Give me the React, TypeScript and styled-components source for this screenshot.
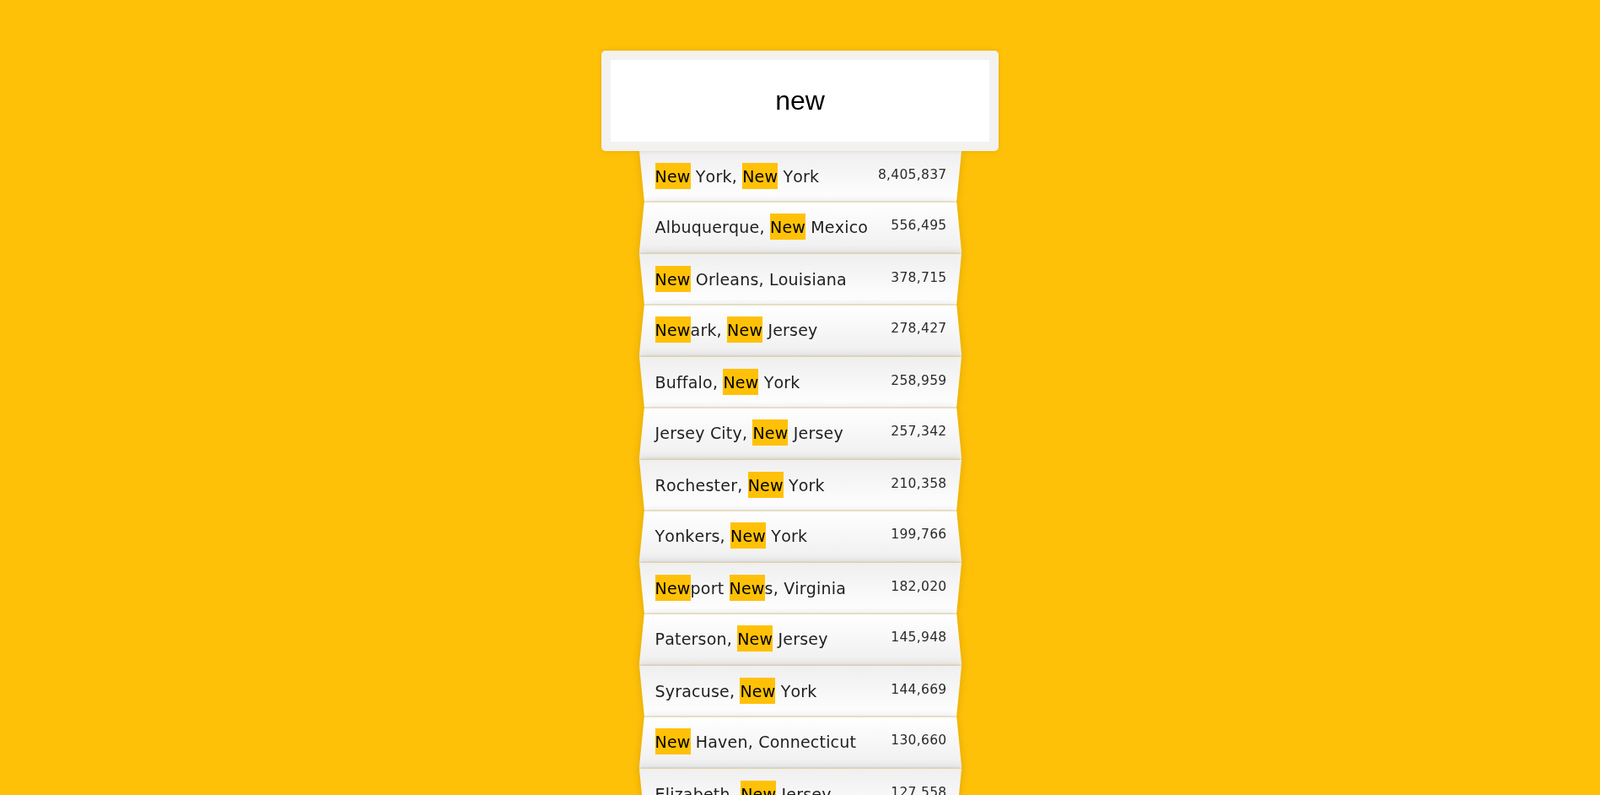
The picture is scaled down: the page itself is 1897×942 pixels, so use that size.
import React, { useState } from "react";
import styled, { createGlobalStyle, css } from "styled-components";

const yellow = "#ffc107";

const GlobalStyle = createGlobalStyle`
  html {
    box-sizing: border-box;
    background: ${yellow};
    overflow: hidden;
  }
  *, *:before, *:after {
    box-sizing: inherit;
  }
  body {
    margin: 8px;
    font-family: "DejaVu Sans", "Liberation Sans", sans-serif;
    font-size: 19px;
    color: #1e1e1e;
  }
`;

const SearchForm = styled.form`
  width: 376px;
  margin: 42px auto 0;
`;

const SearchInput = styled.input`
  display: block;
  position: relative;
  top: 10px;
  z-index: 2;
  width: calc(100% + 95px);
  height: 119px;
  margin: 0 -47.5px;
  padding: 0 20px;
  border: 10px solid #f3f2ee;
  border-radius: 5px;
  outline: 0;
  background: #fff;
  font-family: "Liberation Sans", Arial, sans-serif;
  font-size: 32px;
  color: #000;
  text-align: center;
  box-shadow: 0 0 5px rgba(0, 0, 0, 0.12), inset 0 0 2px rgba(0, 0, 0, 0.19);
`;

const Suggestions = styled.ul`
  position: relative;
  margin: 7px 0 0;
  padding: 0;
`;

/* the folded paper look lives on the ::before layer so the text stays flat */
const Suggestion = styled.li<{ $even: boolean }>`
  position: relative;
  z-index: 0;
  display: flex;
  justify-content: space-between;
  margin: 0;
  padding: 20px 14px 21px 16px;
  line-height: 20px;
  list-style: none;
  text-transform: capitalize;
  font-kerning: none;
  letter-spacing: 0.2px;
  transform: translateY(${({ $even }) => ($even ? 2 : 3)}px);

  &::before {
    content: "";
    position: absolute;
    inset: 0;
    z-index: -1;
    border-bottom: 1px solid #d8d8d8;
    box-shadow: 0 0 10px rgba(0, 0, 0, 0.14);
    ${({ $even }) =>
      $even
        ? css`
            transform: perspective(100px) rotateX(3deg) scale(1.001);
            background: linear-gradient(to bottom, #ffffff 0%, #efefef 100%);
          `
        : css`
            transform: perspective(100px) rotateX(-3deg);
            background: linear-gradient(to top, #ffffff 0%, #efefef 100%);
          `}
  }
`;

const Highlight = styled.span`
  background: ${yellow};
  color: #000;
  padding: 5px 0 3.5px;
`;

const Population = styled.span`
  font-size: 15.5px;
  line-height: 16px;
  color: #2a2a2a;
  letter-spacing: 0.3px;
`;

const cities = [
  { city: "New York", state: "New York", population: 8405837 },
  { city: "Albuquerque", state: "New Mexico", population: 556495 },
  { city: "New Orleans", state: "Louisiana", population: 378715 },
  { city: "Newark", state: "New Jersey", population: 278427 },
  { city: "Buffalo", state: "New York", population: 258959 },
  { city: "Jersey City", state: "New Jersey", population: 257342 },
  { city: "Rochester", state: "New York", population: 210358 },
  { city: "Yonkers", state: "New York", population: 199766 },
  { city: "Newport News", state: "Virginia", population: 182020 },
  { city: "Paterson", state: "New Jersey", population: 145948 },
  { city: "Syracuse", state: "New York", population: 144669 },
  { city: "New Haven", state: "Connecticut", population: 130660 },
  { city: "Elizabeth", state: "New Jersey", population: 127558 },
  { city: "Las Cruces", state: "New Mexico", population: 101324 },
  { city: "Edison", state: "New Jersey", population: 100693 },
];

const escape = (s: string) => s.replace(/[.*+?^${}()|[\]\\]/g, "\\$&");

const numberWithCommas = (x: number) =>
  x.toString().replace(/\B(?=(\d{3})+(?!\d))/g, ",");

function highlight(text: string, word: string) {
  if (!word) return text;
  const parts = text.split(new RegExp(`(${escape(word)})`, "gi"));
  return parts.map((part, i) =>
    i % 2 === 1 ? <Highlight key={i}>{part}</Highlight> : part
  );
}

export default function App() {
  const [query, setQuery] = useState("new");

  const regex = new RegExp(escape(query), "i");
  const matches = query
    ? cities.filter((place) => regex.test(place.city) || regex.test(place.state))
    : [];

  return (
    <>
      <GlobalStyle />
      <SearchForm onSubmit={(e) => e.preventDefault()}>
        <SearchInput
          type="text"
          placeholder="City or State"
          value={query}
          onChange={(e) => setQuery(e.target.value)}
        />
        <Suggestions>
          {matches.map((place, i) => (
            <Suggestion key={place.city} $even={i % 2 === 1}>
              <span>{highlight(`${place.city}, ${place.state}`, query)}</span>
              <Population>{numberWithCommas(place.population)}</Population>
            </Suggestion>
          ))}
        </Suggestions>
      </SearchForm>
    </>
  );
}
